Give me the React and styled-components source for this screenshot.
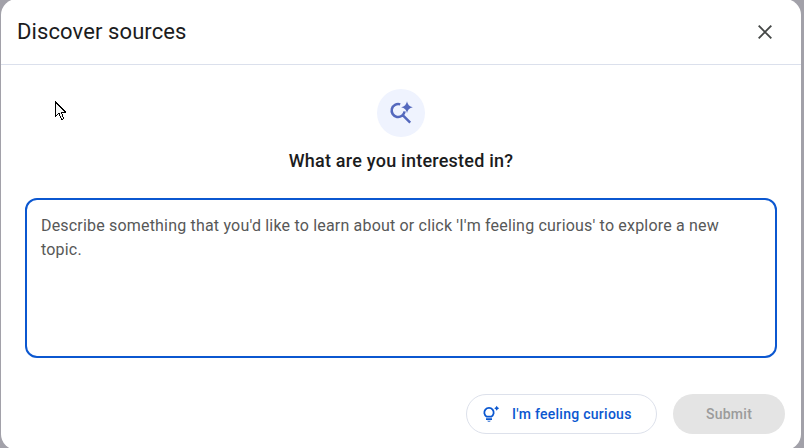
import React from 'react';
import styled, { createGlobalStyle } from 'styled-components';

const Global = createGlobalStyle`
  * { box-sizing: border-box; }
  html, body { margin: 0; height: 448px; overflow: hidden; background: #a2a1a9; }
  body { font-family: Roboto, "Liberation Sans", sans-serif; }
`;
const Backdrop = styled.div`
  position: relative;
  width: 804px;
  height: 448px;
  overflow: hidden;
  padding: 0 3px 0 1px;
  background: #a2a1a9;
`;
const Dialog = styled.section`
  height: 451px;
  margin-top: -1px;
  border-radius: 16px;
  background: #fff;
  display: flex;
  flex-direction: column;
`;
const Header = styled.header`
  height: 66px;
  flex: none;
  padding: 1px 24px 0 16px;
  display: flex;
  align-items: center;
  justify-content: space-between;
  border-bottom: 1px solid #dbe0ec;
`;
const Title = styled.h1`
  margin: 0;
  font-size: 22px;
  line-height: 28px;
  font-weight: 400;
  letter-spacing: 0.1px;
  color: #1b1c1d;
`;
const CloseButton = styled.button`
  width: 24px;
  height: 24px;
  padding: 0;
  border: 0;
  background: none;
  color: #444746;
  svg { display: block; }
`;
const Content = styled.main`
  flex: none;
  padding: 24px 24px 0;
  display: flex;
  flex-direction: column;
  align-items: center;
`;
const Badge = styled.div`
  width: 48px;
  height: 48px;
  border-radius: 50%;
  background: #eff3fe;
  color: #5468bd;
  display: flex;
  align-items: center;
  justify-content: center;
`;
const Question = styled.h2`
  margin: 12px 0 25px;
  font-size: 18px;
  line-height: 24px;
  font-weight: 500;
  letter-spacing: 0.23px;
  white-space: nowrap;
  color: #1b1c1d;
`;
const TopicField = styled.div`
  width: 752px;
  height: 160px;
  padding: 14px;
  border: 2px solid #0b57d0;
  border-radius: 12px;
  font-size: 16px;
  line-height: 24px;
  letter-spacing: 0.187px;
  color: #575858;
`;
const Line = styled.span`
  display: block;
  white-space: nowrap;
`;
const Footer = styled.footer`
  padding: 36px 16px 0;
  display: flex;
  justify-content: flex-end;
  gap: 16px;
`;
const Button = styled.button`
  width: ${(p) => (p.$filled ? 112 : 191)}px;
  height: 40px;
  padding: ${(p) => (p.$filled ? '0' : '0 0 0 15px')};
  border: ${(p) => (p.$filled ? '0' : '1px solid #dde1eb')};
  border-radius: 20px;
  background: ${(p) => (p.$filled ? '#e4e4e4' : '#fff')};
  color: ${(p) => (p.$filled ? '#9b9b9b' : '#0b57d0')};
  display: flex;
  align-items: center;
  justify-content: ${(p) => (p.$filled ? 'center' : 'flex-start')};
  gap: 12px;
  font: 500 14px/20px Roboto, "Liberation Sans", sans-serif;
  letter-spacing: 0.27px;
  white-space: nowrap;
`;
const Pointer = styled.svg`
  position: absolute;
  left: 55px;
  top: 101px;
`;

const CloseIcon = () => (
  <svg width="24" height="24" viewBox="0 0 24 24" fill="none" stroke="currentColor" strokeWidth="1.9">
    <path d="M5.7 5.7 18.3 18.3M18.3 5.7 5.7 18.3" />
  </svg>
);
const SearchSparkIcon = () => (
  <svg width="24" height="24" viewBox="0 0 24 24">
    <path d="M11.2 3.4A6.5 6.5 0 1 0 15.6 10.4M13.2 13.7 21.2 21.6" fill="none" stroke="currentColor" strokeWidth="2.5" />
    <path d="M18 0.3Q18.7 5.3 23.8 6.2Q18.7 7.1 18 12.1Q17.3 7.1 12.2 6.2Q17.3 5.3 18 .3Z" fill="currentColor" />
  </svg>
);
const BulbSparkIcon = () => (
  <svg width="18" height="18" viewBox="0 0 18 18">
    <path d="M4.7 11.7A4.7 4.7 0 1 1 9.3 11.7Z" fill="none" stroke="currentColor" strokeWidth="1.8" strokeLinejoin="round" />
    <path d="M4 13.3H10V15H4ZM5.2 15.8H8.8A1.9 1.5 0 0 1 5.2 15.8ZM14.7 .8Q15.3 2.7 17.2 3.3Q15.3 3.9 14.7 5.8Q14.1 3.9 12.2 3.3Q14.1 2.7 14.7 .8Z" fill="currentColor" />
  </svg>
);

export default function App() {
  return (
    <>
      <Global />
      <Backdrop>
        <Dialog role="dialog" aria-labelledby="dialog-title">
          <Header>
            <Title id="dialog-title">Discover sources</Title>
            <CloseButton aria-label="Close"><CloseIcon /></CloseButton>
          </Header>
          <Content>
            <Badge><SearchSparkIcon /></Badge>
            <Question>What are you interested in?</Question>
            <TopicField role="textbox" aria-multiline="true">
              <Line>Describe something that you'd like to learn about or click 'I'm feeling curious' to explore a new</Line>
              <Line>topic.</Line>
            </TopicField>
          </Content>
          <Footer>
            <Button><BulbSparkIcon />I'm feeling curious</Button>
            <Button $filled disabled>Submit</Button>
          </Footer>
        </Dialog>
        <Pointer width="12" height="20" viewBox="0 0 12 20" shapeRendering="crispEdges">
          <path d="M.5 .8V15.2L3.8 12L6.2 17.8Q7.5 19 8.6 17.2L6.3 11.5H10.8Z" fill="#f5f6f6" stroke="#000" strokeWidth="1" />
        </Pointer>
      </Backdrop>
    </>
  );
}
